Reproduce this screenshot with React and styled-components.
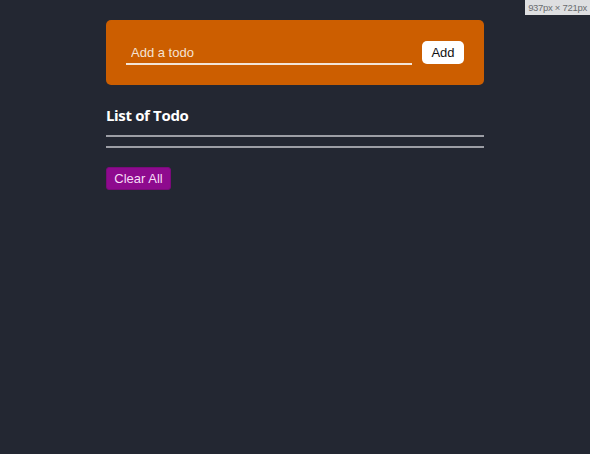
import React from "react";
import styled, { createGlobalStyle } from "styled-components";

const Global = createGlobalStyle`
  html, body { margin: 0; padding: 0; background: #232732; }
  body { font-family: "Liberation Sans", Arial, sans-serif; }
`;

const Page = styled.div`
  min-height: 454px;
  background: #232732;
  display: flex;
  justify-content: center;
  padding-top: 20px;
  box-sizing: border-box;
`;

const Column = styled.div`
  width: 378px;
  display: flex;
  flex-direction: column;
`;

const Card = styled.form`
  background: #cc5e00;
  border-radius: 5px;
  height: 65px;
  padding: 0 20px;
  box-sizing: border-box;
  display: flex;
  align-items: center;
  gap: 10px;
`;

const Input = styled.input`
  flex: 1;
  background: transparent;
  border: none;
  border-bottom: 2px solid #f3e4d6;
  outline: none;
  color: #fff;
  font-family: "Liberation Sans", Arial, sans-serif;
  font-size: 13px;
  line-height: 15px;
  height: 24px;
  box-sizing: border-box;
  padding: 4px 5px 3px;
  margin: 0;
  &::placeholder { color: #f4e3d4; }
`;

const AddButton = styled.button`
  width: 42px;
  height: 23px;
  border: none;
  border-radius: 5px;
  background: #ffffff;
  color: #111;
  font-family: "Liberation Sans", Arial, sans-serif;
  font-size: 13px;
  padding: 0;
`;

const Heading = styled.h2`
  margin: 20px 0 0;
  font-family: "Open Sans", sans-serif;
  font-weight: 700;
  font-size: 15px;
  letter-spacing: -0.35px;
  line-height: 20px;
  color: #ffffff;
`;

const Rule = styled.div`
  height: 2px;
  background: #9c9ea5;
  margin-top: ${p => p.$top}px;
`;

const ClearButton = styled.button`
  align-self: flex-start;
  margin-top: 19px;
  width: 65px;
  height: 23px;
  border: 1px solid #7a0a7a;
  border-radius: 3px;
  background: #8e0a8e;
  color: #f6dcf6;
  font-family: "Liberation Sans", Arial, sans-serif;
  font-size: 13px;
  padding: 0;
`;

const Badge = styled.div`
  position: absolute;
  top: 0;
  right: 0;
  width: 65px;
  height: 15px;
  background: #dedfe1;
  color: #6b6d70;
  font-family: "Liberation Sans", Arial, sans-serif;
  font-size: 9.5px;
  letter-spacing: -0.3px;
  line-height: 15px;
  text-align: center;
  white-space: nowrap;
  overflow: hidden;
`;

export default function App() {
  return (
    <>
      <Global />
      <Page>
        <Column>
          <Card onSubmit={e => e.preventDefault()}>
            <Input placeholder="Add a todo" />
            <AddButton type="submit">Add</AddButton>
          </Card>
          <Heading>List of Todo</Heading>
          <Rule $top={10} />
          <Rule $top={9} />
          <ClearButton>Clear All</ClearButton>
        </Column>
      </Page>
      <Badge>937px × 721px</Badge>
    </>
  );
}
